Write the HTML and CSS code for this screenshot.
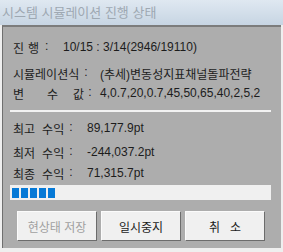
FILE: index.html
```html
<!DOCTYPE html>
<html lang="ko">
<head>
    <meta charset="UTF-8">
    <meta name="viewport" content="width=device-width, initial-scale=1.0">
    <title>시스템 시뮬레이션 진행 상태</title>
    <link rel="stylesheet" href="styles.css">
</head>
<body>
    <div class="창">
        <div class="제목줄">시스템 시뮬레이션 진행 상태</div>

        <div class="본문">
            <!-- 진행 정보 -->
            <div class="줄 첫줄">
                <span class="라벨 라벨-진행"><span>진</span><span class="행">행</span><span class="콜론">:</span></span>
                <span>10/15 : 3/14(2946/19110)</span>
            </div>
            <div class="줄 둘째줄">
                <span class="라벨 라벨-긴"><span>시뮬레이션식</span><span class="콜론2">:</span></span>
                <span>(추세)변동성지표채널돌파전략</span>
            </div>
            <div class="줄">
                <span class="라벨 라벨-긴"><span>변</span><span class="수">수</span><span class="값">값</span><span class="콜론3">:</span></span>
                <span>4,0.7,20,0.7,45,50,65,40,2,5,2</span>
            </div>

            <div class="구분선"></div>

            <!-- 수익 정보 -->
            <div class="줄 수익줄1">
                <span class="라벨 라벨-수익"><span>최고</span><span class="수익">수익</span><span class="콜론4">:</span></span>
                <span>89,177.9pt</span>
            </div>
            <div class="줄 수익줄2">
                <span class="라벨 라벨-수익"><span>최저</span><span class="수익">수익</span><span class="콜론4">:</span></span>
                <span>-244,037.2pt</span>
            </div>
            <div class="줄 수익줄3">
                <span class="라벨 라벨-수익"><span>최종</span><span class="수익">수익</span><span class="콜론4">:</span></span>
                <span>71,315.7pt</span>
            </div>

            <div class="진행바">
                <span class="칸"></span><span class="칸"></span><span class="칸"></span><span class="칸"></span><span class="칸"></span>
            </div>

            <div class="버튼들">
                <button class="버튼 비활성">현상태 저장</button>
                <button class="버튼">일시중지</button>
                <button class="버튼 취소">취   소</button>
            </div>
        </div>
    </div>
</body>
</html>
```

FILE: styles.css
```css
body {
    margin: 0;
    padding: 0;
    background-color: #efefef;
    font-family: "Liberation Sans", "Noto Sans CJK KR", sans-serif;
}

.창 {
    width: 283px;
    height: 252px;
    background-color: #efefef;
}

.제목줄 {
    height: 25px;
    line-height: 25px;
    padding-left: 2px;
    font-size: 13px;
    color: #9ea8b2;
    background: linear-gradient(#dfe8f1, #c7d5e3);
}

.본문 {
    margin-left: 2px;
    width: 279px;
    height: 223px;
    box-sizing: border-box;
    border-left: 1px solid #6f6f6f;
    border-top: 2px solid #7c7c7c;
    background-color: #adadad;
    padding: 10px 0 0 7px;
    color: #1c1c1c;
    font-size: 12px;
}

.줄 {
    display: flex;
    align-items: center;
    height: 20px;
    padding-left: 3px;
    white-space: nowrap;
}

.둘째줄 {
    margin-top: 6px;
}

.라벨 {
    display: flex;
    flex-shrink: 0;
}

.라벨-진행 {
    width: 50px;
}

.행 {
    margin-left: 4px;
}

.콜론 {
    margin-left: 6px;
}

.라벨-긴 {
    width: 87px;
}

.콜론2 {
    margin-left: 5px;
}

.수 {
    margin-left: 23px;
}

.값 {
    margin-left: 15px;
}

.콜론3 {
    margin-left: 4px;
}

.라벨-수익 {
    width: 74px;
}

.수익 {
    margin-left: 7px;
}

.콜론4 {
    margin-left: 5px;
}

.구분선 {
    margin-top: 7px;
    width: 261px;
    height: 2px;
    background-color: #f2f2f2;
}

.수익줄1 {
    margin-top: 6px;
}

.수익줄2 {
    margin-top: 4px;
}

.수익줄3 {
    margin-top: 1px;
}

.진행바 {
    margin-top: 2px;
    width: 261px;
    height: 15px;
    box-sizing: border-box;
    padding: 3px 0 0 2px;
    background-color: #f0f0f0;
    display: flex;
    gap: 2px;
}

.칸 {
    width: 7px;
    height: 10px;
    background-color: #0679d6;
}

.버튼들 {
    margin-top: 11px;
    margin-left: 7px;
    display: flex;
    gap: 4px;
}

.버튼 {
    width: 80px;
    height: 30px;
    padding: 0;
    font-family: "Liberation Sans", "Noto Sans CJK KR", sans-serif;
    font-size: 12px;
    color: #1c1c1c;
    background-color: #f0f0f0;
    border: 1px solid;
    border-color: #fbfbfb #6c6c6c #6c6c6c #fbfbfb;
    white-space: pre;
}

.비활성 {
    color: #a0a0a0;
}
```
